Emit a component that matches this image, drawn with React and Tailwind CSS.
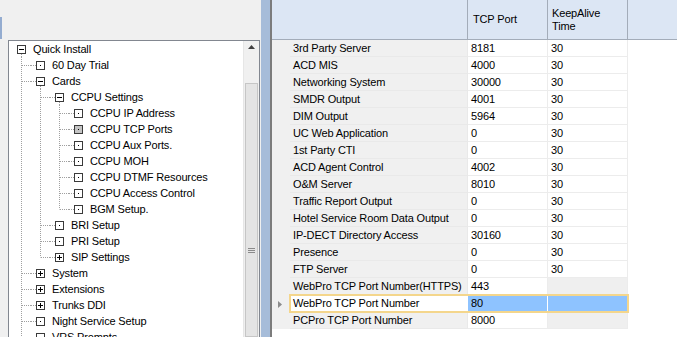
import React from 'react';

const font = "font-['Liberation_Sans',Arial,sans-serif] text-[11px] tracking-[-0.15px] text-black";

const tree = [
    { label: 'Quick Install', guides: [], box: 'minus', open: true },
    { label: '60 Day Trial', guides: ['tee'], box: 'leaf' },
    { label: 'Cards', guides: ['tee'], box: 'minus', open: true },
    { label: 'CCPU Settings', guides: ['pipe', 'tee'], box: 'minus', open: true },
    { label: 'CCPU IP Address', guides: ['pipe', 'pipe', 'tee'], box: 'leaf' },
    { label: 'CCPU TCP Ports', guides: ['pipe', 'pipe', 'tee'], box: 'leaf', selected: true },
    { label: 'CCPU Aux Ports.', guides: ['pipe', 'pipe', 'tee'], box: 'leaf' },
    { label: 'CCPU MOH', guides: ['pipe', 'pipe', 'tee'], box: 'leaf' },
    { label: 'CCPU DTMF Resources', guides: ['pipe', 'pipe', 'tee'], box: 'leaf' },
    { label: 'CCPU Access Control', guides: ['pipe', 'pipe', 'tee'], box: 'leaf' },
    { label: 'BGM Setup.', guides: ['pipe', 'pipe', 'elbow'], box: 'leaf' },
    { label: 'BRI Setup', guides: ['pipe', 'tee'], box: 'leaf' },
    { label: 'PRI Setup', guides: ['pipe', 'tee'], box: 'leaf' },
    { label: 'SIP Settings', guides: ['pipe', 'elbow'], box: 'plus' },
    { label: 'System', guides: ['tee'], box: 'plus' },
    { label: 'Extensions', guides: ['tee'], box: 'plus' },
    { label: 'Trunks DDI', guides: ['tee'], box: 'plus' },
    { label: 'Night Service Setup', guides: ['tee'], box: 'leaf' },
    { label: 'VRS Prompts', guides: ['tee'], box: 'leaf' },
];

const ports = [
    ['3rd Party Server', '8181', '30'],
    ['ACD MIS', '4000', '30'],
    ['Networking System', '30000', '30'],
    ['SMDR Output', '4001', '30'],
    ['DIM Output', '5964', '30'],
    ['UC Web Application', '0', '30'],
    ['1st Party CTI', '0', '30'],
    ['ACD Agent Control', '4002', '30'],
    ['O&M Server', '8010', '30'],
    ['Traffic Report Output', '0', '30'],
    ['Hotel Service Room Data Output', '0', '30'],
    ['IP-DECT Directory Access', '30160', '30'],
    ['Presence', '0', '30'],
    ['FTP Server', '0', '30'],
    ['WebPro TCP Port Number(HTTPS)', '443', null],
    ['WebPro TCP Port Number', '80', null],
    ['PCPro TCP Port Number', '8000', null],
];

const DOT = { stroke: '#a0a0a0', strokeWidth: 1, strokeDasharray: '1 1' };

const Guide = ({ type }) => (
    <svg width="19" height="16" className="shrink-0">
        {type === 'elbow'
            ? <line x1="9.5" y1="0" x2="9.5" y2="8.5" {...DOT} />
            : <line x1="9.5" y1="0" x2="9.5" y2="16" {...DOT} />}
        {type !== 'pipe' && <line x1="10" y1="8.5" x2="19" y2="8.5" {...DOT} />}
    </svg>
);

const Expander = ({ kind, open, child, selected }) => (
    <svg width="19" height="16" className="shrink-0">
        {child && <line x1="0" y1="8.5" x2="5" y2="8.5" {...DOT} />}
        {open && <line x1="9.5" y1="13" x2="9.5" y2="16" {...DOT} />}
        <rect x="5.5" y="4.5" width="8" height="8" fill={selected ? '#c4c4c4' : '#fff'} stroke="#3a3a3a" />
        {kind === 'leaf' && <rect x="9" y="8" width="1" height="1" fill="#000" />}
        {kind !== 'leaf' && <rect x="7" y="8" width="5" height="1" fill="#000" />}
        {kind === 'plus' && <rect x="9" y="6" width="1" height="5" fill="#000" />}
    </svg>
);

const Scrollbar = () => (
    <div className="w-[16px] shrink-0 bg-[#f0f0f0] border-l border-[#e6e6e6] flex flex-col items-center">
        <div className="h-[17px] w-full flex items-center justify-center">
            <svg width="7" height="4"><polygon points="0,4 3.5,0 7,4" fill="#404040" /></svg>
        </div>
        <div className="h-[40px]" />
        <div className="w-[13px] h-[340px] bg-[#e4e4e4] border border-[#c6c6c6] flex flex-col items-center">
            <div className="mt-[164px] flex flex-col gap-[1px]">
                <div className="w-[7px] h-px bg-[#8a8a8a]" />
                <div className="w-[7px] h-px bg-[#8a8a8a]" />
                <div className="w-[7px] h-px bg-[#8a8a8a]" />
            </div>
        </div>
    </div>
);

const TreePanel = () => (
    <div className="w-[261px] shrink-0 flex flex-col">
        <div className="h-[40px] shrink-0">
            <div className="mt-[17px] w-[2px] h-[22px] bg-[#94acd0]" />
        </div>
        <div className="ml-[8px] w-[252px] h-[320px] border-t border-x border-[#828790] bg-white flex overflow-hidden">
            <div className="flex-1 pl-[3px] flex flex-col">
                {tree.map((n) => (
                    <div key={n.label} className="h-[16px] flex items-center shrink-0">
                        {n.guides.map((g, i) => <Guide key={i} type={g} />)}
                        <Expander kind={n.box} open={n.open} child={n.guides.length > 0} selected={n.selected} />
                        <span className={`${font} ml-[2px] leading-[16px] whitespace-nowrap`}>{n.label}</span>
                    </div>
                ))}
            </div>
            <Scrollbar />
        </div>
    </div>
);

const PortGrid = () => (
    <div className="flex-1 flex flex-col bg-white overflow-hidden">
        <div className="h-[40px] shrink-0 flex bg-[#dce6f4] border-b border-[#a3acb9]">
            <div className="w-[196px] border-r border-[#a3acb9]" />
            <div className={`${font} w-[80px] border-r border-[#a3acb9] pl-[5px] flex items-center`}>TCP Port</div>
            <div className={`${font} w-[80px] border-r border-[#a3acb9] pl-[4px] flex items-center leading-[13px]`}>KeepAlive<br />Time</div>
            <div className="flex-1" />
        </div>
        {ports.map(([name, port, keep], i) => {
            const sel = i === 15;
            return (
                <div key={name} className="h-[17px] flex shrink-0">
                    <div className="w-[18px] bg-[#f0f0f0] flex items-center">
                        {sel && <svg width="18" height="16"><polygon points="6,5 10,8.5 6,12" fill="#8c8c8c" /></svg>}
                    </div>
                    <div className={`flex ${sel ? 'outline-2 outline-[#f4d68c] -outline-offset-1 z-10' : ''}`}>
                        <div className={`${font} w-[178px] pl-[3px] leading-[16px] border-b border-r whitespace-nowrap ${sel ? 'bg-white border-white' : 'bg-[#f0f0f0] border-[#e9e9e9]'}`}>{name}</div>
                        <div className={`${font} w-[80px] pl-[3px] leading-[16px] border-b border-r ${sel ? 'bg-[#8ec3ff] border-[#8ec3ff] border-r-white' : 'bg-white border-[#ececec]'}`}>{port}</div>
                        <div className={`${font} w-[80px] pl-[3px] leading-[16px] border-b border-r ${sel ? 'bg-[#8ec3ff] border-[#8ec3ff]' : keep ? 'bg-white border-[#ececec]' : 'bg-[#efefef] border-[#ececec]'}`}>{keep}</div>
                    </div>
                </div>
            );
        })}
    </div>
);

const App = () => {
    return (
        <div className="w-[677px] h-[337px] flex overflow-hidden bg-[#f0f0f0]">
            <TreePanel />
            <div className="w-[9px] shrink-0 bg-[#a6bcd9]" />
            <div className="w-[2px] shrink-0 bg-[#7c7c7c]" />
            <PortGrid />
        </div>
    );
};

export default App;
